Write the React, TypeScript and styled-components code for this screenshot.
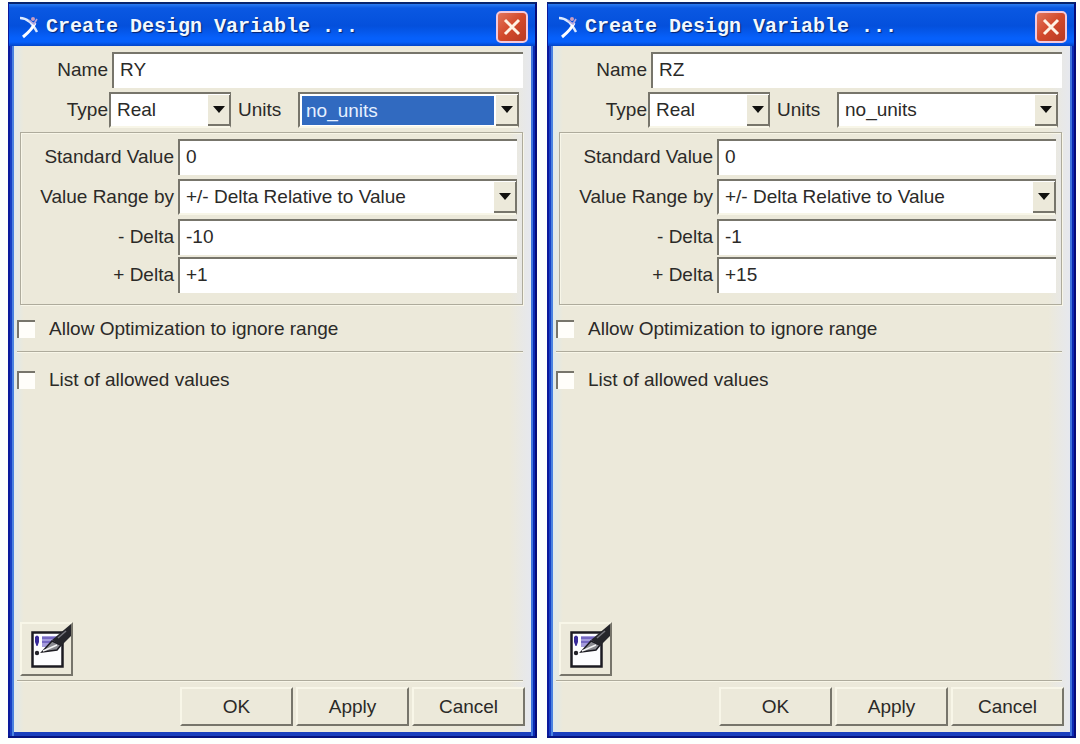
import React, { useId, useState } from "react";
import styled, { createGlobalStyle, css } from "styled-components";

const face = "#ece9da";
const light = "#f8f6e8";
const shade = "#77756b";
const groove = "#aeab9c";

const GlobalStyle = createGlobalStyle`
  * { box-sizing: border-box; }
  body { margin: 0; background: #fdfffd; }
  body, button, input, select {
    font-family: "Liberation Sans", Arial, sans-serif;
    font-size: 19px;
    line-height: 24px;
    color: #2b2a28;
  }
`;

const Desktop = styled.main`
  display: flex;
  gap: 10px;
  min-height: 100vh;
  padding: 2px 4px 6px 8px;
`;

const Window = styled.section`
  flex: 1;
  min-width: 0;
  display: flex;
  flex-direction: column;
  background: linear-gradient(90deg, #0a1a9c 0 2px, #1740c4 2px 4px, #4a82e0 4px 6px, transparent 6px calc(100% - 6px), #3f74dc calc(100% - 6px) calc(100% - 4px), #0a2ab4 calc(100% - 4px) calc(100% - 2px), #060c78 calc(100% - 2px)), #1a3fbe;
  border-bottom: 2px solid #061480;
  padding: 0 6px 4px;
`;

const TitleBar = styled.header`
  display: flex;
  align-items: center;
  gap: 2px;
  height: 44px;
  margin: 0 -6px;
  padding: 3px 7px 0 11px;
  border-left: 1px solid #0a1a9c;
  border-right: 2px solid #060c78;
  border-top: 2px solid #06246e;
  background: linear-gradient(180deg, #2a7cf0 0, #0a58e2 4px, #0450dc 22px, #0660fb 34px, #0660fb 38px, #0345c8 42px);
`;

const Title = styled.h1`
  flex: 1;
  margin: 0;
  font: bold 20px/24px "Liberation Mono", "Courier New", monospace;
  color: #f2f8ff;
  text-shadow: 1px 1px 1px #06246e;
  white-space: nowrap;
  overflow: hidden;
`;

const CloseButton = styled.button`
  display: grid;
  place-items: center;
  width: 32px;
  height: 32px;
  padding: 0;
  border: 2px solid #f3c9dc;
  border-radius: 5px;
  background: linear-gradient(135deg, #e2755c, #d2492a 50%, #b83a24);
`;

const Body = styled.form`
  flex: 1;
  display: flex;
  flex-direction: column;
  padding: 6px 8px 6px 3px;
  background: linear-gradient(90deg, #dfe9ea, ${face} 10px calc(100% - 22px), #e6e8ee);
`;

const Row = styled.div<{ $label: number; $gap?: number }>`
  display: grid;
  grid-template-columns: ${(p) => p.$label}px minmax(0, 1fr);
  align-items: center;
  margin-bottom: ${(p) => p.$gap ?? 4}px;
`;

const Label = styled.label`
  text-align: right;
  padding-right: 4px;
  white-space: nowrap;
`;

const TypeRow = styled.div`
  display: grid;
  grid-template-columns: 92px 122px 67px minmax(0, 1fr);
  align-items: center;
  margin: 0 4px 4px 0;
`;

const TypeLabel = styled(Label)`
  padding-right: 1px;
`;

const UnitsLabel = styled(Label)`
  text-align: left;
  padding-left: 7px;
`;

const sunken = css`
  width: 100%;
  height: 36px;
  border: 0 solid ${shade};
  border-top-width: 2px;
  border-left-width: 2px;
  border-radius: 0;
  background: #fff;
  outline: 0;
`;

const TextBox = styled.input`
  ${sunken}
  padding: 0 6px 2px;
`;

const SelectFrame = styled.div<{ $active?: boolean }>`
  position: relative;
  ${sunken}
  border-right: 1px solid ${shade};
  border-bottom: 2px solid ${light};
  padding: ${(p) => (p.$active ? "2px 24px 1px 2px" : "0 24px 0 0")};
`;

const SelectBox = styled.select<{ $active?: boolean }>`
  appearance: none;
  display: block;
  width: 100%;
  height: 100%;
  padding: 0 ${(p) => (p.$active ? 4 : 6)}px;
  border: 0;
  border-radius: 0;
  outline: 0;
  background: ${(p) => (p.$active ? "#316ac0" : "#fff")};
  color: ${(p) => (p.$active ? "#e6f0ff" : "inherit")};
`;

const ArrowCap = styled.span`
  position: absolute;
  top: 1px;
  right: 0;
  bottom: 0;
  width: 22px;
  display: grid;
  place-items: center;
  border-right: 1px solid ${shade};
  border-bottom: 2px solid ${shade};
  background: ${face};
  pointer-events: none;
`;

const Group = styled.fieldset`
  min-width: 0;
  margin: 0 0 0 3px;
  padding: 6px 5px 7px 0;
  border: 1px solid ${groove};
  box-shadow: 1px 1px 0 ${light}, inset 1px 1px 0 ${light};
`;

const Checks = styled.div`
  padding-top: 12px;
`;

const CheckRow = styled.label`
  display: flex;
  align-items: center;
  gap: 14px;
  height: 24px;
  white-space: nowrap;
`;

const CheckBox = styled.input`
  appearance: none;
  width: 18px;
  height: 18px;
  margin: 0;
  border: 0 solid ${shade};
  border-top-width: 2px;
  border-left-width: 2px;
  background: #fffefa;
  &:checked { background: #fffefa radial-gradient(#2b2a28 40%, transparent 45%); }
`;

const Divider = styled.hr<{ $top: number; $bottom: number }>`
  width: 100%;
  height: 2px;
  margin: ${(p) => p.$top}px 0 ${(p) => p.$bottom}px;
  border: 0;
  border-top: 1px solid ${groove};
  background: ${light};
`;

const Tools = styled.div`
  flex: 1;
  display: flex;
  align-items: flex-end;
  padding-left: 3px;
`;

const raised = css`
  border: 2px solid ${shade};
  border-top-color: ${light};
  border-left-color: ${light};
  border-radius: 0;
  background: ${face};
`;

const IconButton = styled.button`
  ${raised}
  display: grid;
  width: 53px;
  height: 54px;
  padding: 0;
`;

const Actions = styled.div`
  display: flex;
  justify-content: flex-end;
  gap: 3px;
  margin-right: -2px;
`;

const ActionButton = styled.button`
  ${raised}
  width: 113px;
  height: 39px;
  padding: 0;
`;

const AppMark = () => (
  <svg width="24" height="24" viewBox="0 0 24 24" fill="none" aria-hidden="true">
    <path d="M0 3 C6 3 12 7 17 17" stroke="#dceaff" strokeWidth="2.4" />
    <path d="M15 8 C13 13 9 17 3 22" stroke="#fff" strokeWidth="3" />
    <path d="M9 5 L14 9 L17 4" stroke="#b7a5dc" strokeWidth="1.6" />
    <circle cx="13" cy="4" r="2" fill="#c99cc0" />
  </svg>
);

const CloseMark = () => (
  <svg width="20" height="20" viewBox="0 0 20 20" aria-hidden="true">
    <path d="M3 3 L17 17 M17 3 L3 17" stroke="#fff3e4" strokeWidth="3" />
  </svg>
);

const Arrow = () => (
  <svg width="12" height="7" viewBox="0 0 12 7" aria-hidden="true">
    <path d="M0 0 H12 L6 7 Z" fill="#11110f" />
  </svg>
);

const NoteMark = () => (
  <svg width="49" height="50" viewBox="0 0 49 50" aria-hidden="true">
    <rect x="10.5" y="8.5" width="30" height="34" fill="#fdfdff" stroke="#1c1b22" strokeWidth="2.5" />
    <path d="M13 13 Q15 10 17 13 V18 L15.5 22 H14.5 L13 18 Z" fill="#37299a" />
    <circle cx="15" cy="29" r="2.2" fill="#232229" />
    <path d="M20 12 H36 L24 23 H20 Z" fill="#a49bdc" />
    <path d="M20 14 H33 M20 18 H29" stroke="#6658bb" strokeWidth="1.6" />
    <path d="M20 28 L30 17 L39 21 L35 26 Z" fill="#8b8b91" stroke="#1c1b22" strokeWidth="1.5" />
    <path d="M21 27 L35 21" stroke="#f5f5f5" strokeWidth="1.5" />
    <path d="M30 16 L49 0 V12 L39 22 Z" fill="#26262b" />
    <path d="M36 14 L44 7" stroke="#77777e" strokeWidth="1.5" />
  </svg>
);

type DropDownProps = { id: string; options: string[]; active?: boolean };

const DropDown = ({ id, options, active }: DropDownProps) => (
  <SelectFrame $active={active}>
    <SelectBox id={id} $active={active}>
      {options.map((o) => (
        <option key={o}>{o}</option>
      ))}
    </SelectBox>
    <ArrowCap>
      <Arrow />
    </ArrowCap>
  </SelectFrame>
);

type FieldProps = { id: string; label: string; initial: string; labelWidth: number; gap?: number };

const Field = ({ id, label, initial, labelWidth, gap }: FieldProps) => {
  const [value, setValue] = useState(initial);
  return (
    <Row $label={labelWidth} $gap={gap}>
      <Label htmlFor={id}>{label}</Label>
      <TextBox id={id} value={value} onChange={(e) => setValue(e.target.value)} />
    </Row>
  );
};

type VariableProps = { name: string; minus: string; plus: string; unitsActive?: boolean };

const VariableDialog = ({ name, minus, plus, unitsActive }: VariableProps) => {
  const id = useId();
  return (
    <Window>
      <TitleBar>
        <AppMark />
        <Title>Create Design Variable ...</Title>
        <CloseButton type="button" aria-label="Close">
          <CloseMark />
        </CloseButton>
      </TitleBar>
      <Body onSubmit={(e) => e.preventDefault()}>
        <Field id={`${id}name`} label="Name" initial={name} labelWidth={95} />
        <TypeRow>
          <TypeLabel htmlFor={`${id}type`}>Type</TypeLabel>
          <DropDown id={`${id}type`} options={["Real"]} />
          <UnitsLabel htmlFor={`${id}units`}>Units</UnitsLabel>
          <DropDown id={`${id}units`} options={["no_units"]} active={unitsActive} />
        </TypeRow>
        <Group>
          <Field id={`${id}std`} label="Standard Value" initial="0" labelWidth={157} />
          <Row $label={157}>
            <Label htmlFor={`${id}range`}>Value Range by</Label>
            <DropDown id={`${id}range`} options={["+/- Delta Relative to Value"]} />
          </Row>
          <Field id={`${id}minus`} label="- Delta" initial={minus} labelWidth={157} gap={2} />
          <Field id={`${id}plus`} label="+ Delta" initial={plus} labelWidth={157} />
        </Group>
        <Checks>
          <CheckRow>
            <CheckBox type="checkbox" />
            Allow Optimization to ignore range
          </CheckRow>
          <Divider $top={10} $bottom={15} />
          <CheckRow>
            <CheckBox type="checkbox" />
            List of allowed values
          </CheckRow>
        </Checks>
        <Tools>
          <IconButton type="button" aria-label="Edit comments">
            <NoteMark />
          </IconButton>
        </Tools>
        <Divider $top={4} $bottom={5} />
        <Actions>
          <ActionButton type="submit">OK</ActionButton>
          <ActionButton type="button">Apply</ActionButton>
          <ActionButton type="button">Cancel</ActionButton>
        </Actions>
      </Body>
    </Window>
  );
};

export default function App() {
  return (
    <>
      <GlobalStyle />
      <Desktop>
        <VariableDialog name="RY" minus="-10" plus="+1" unitsActive />
        <VariableDialog name="RZ" minus="-1" plus="+15" />
      </Desktop>
    </>
  );
}
